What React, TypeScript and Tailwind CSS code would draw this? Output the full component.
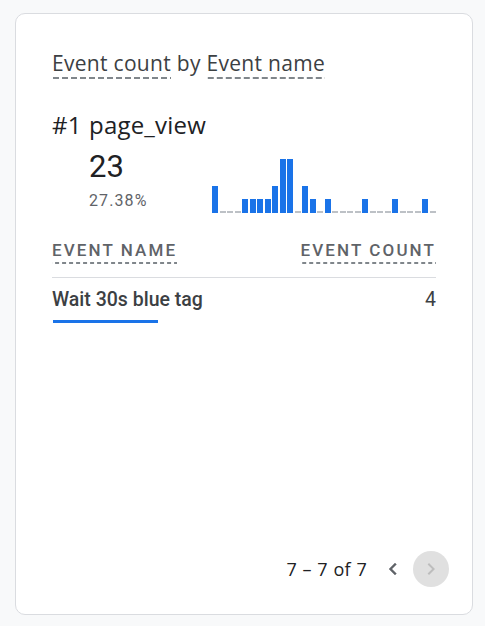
const bars = [2, 0, 0, 0, 1, 1, 1, 1, 2, 4, 4, 0, 2, 1, 0, 1, 0, 0, 0, 0, 1, 0, 0, 0, 1, 0, 0, 0, 1, 0];

const titleDash =
    "bg-[linear-gradient(to_right,#80868b_6px,transparent_6px)] bg-[length:9px_2px] bg-repeat-x bg-bottom pb-[1.5px]";
const headDash =
    "bg-[linear-gradient(to_right,#80868b_4px,transparent_4px)] bg-[length:7px_2px] bg-repeat-x bg-bottom pb-[2.5px]";

export default function App() {
    return (
        <main className="w-[485px] h-[626px] bg-[#f8f9fa] pt-[13px] px-[15px] font-['Roboto',sans-serif]">
            <div className="w-[458px] h-[602px] bg-white border border-[#dadce0] rounded-[10px] px-[36px] pt-[34px] pb-[27px] flex flex-col">
                <h2 className="text-[21px] leading-[30px] tracking-[0.3px] text-[#3c4043] font-['Open_Sans',sans-serif]">
                    <span className={titleDash}>Event count</span>
                    {" by "}
                    <span className={titleDash}>Event name</span>
                </h2>

                <div className="mt-[30.5px] flex text-[24px] leading-[32px] tracking-[0.2px] text-[#202124] font-['Open_Sans',sans-serif]">
                    <span className="w-[37px]">#1</span>
                    <span>page_view</span>
                </div>

                <div className="flex items-end">
                    <div className="pl-[37px] w-[160px] pb-[1.5px]">
                        <div className="mt-[7.5px] text-[31px] leading-[38px] text-[#202124]">23</div>
                        <div className="mt-[5px] text-[16px] leading-[20px] tracking-[1.1px] text-[#5f6368]">27.38%</div>
                    </div>
                    <div className="flex items-end gap-[1.5px] h-[60px]">
                        {bars.map((v, i) => (
                            <div
                                key={i}
                                className={v ? "w-[6px] bg-[#1a73e8]" : "w-[6px] bg-[#bdc1c6]"}
                                style={{ height: v ? v * 13.5 : 2 }}
                            />
                        ))}
                    </div>
                </div>

                <div className="mt-[26.5px] flex justify-between text-[17px] leading-[22px] tracking-[2.1px] font-medium text-[#5f6368]">
                    <span className={headDash}>EVENT NAME</span>
                    <span className={headDash}>EVENT COUNT</span>
                </div>

                <div className="mt-[13.5px] border-t border-[#dadce0]" />

                <div className="mt-[10.3px] flex justify-between text-[19.5px] leading-[24px] text-[#3c4043]">
                    <span className="font-medium">Wait 30s blue tag</span>
                    <span>4</span>
                </div>
                <div className="mt-[7.7px] ml-[1px] w-[105px] h-[3px] bg-[#1a73e8]" />

                <div className="mt-auto -mr-[13px] flex items-center justify-end">
                    <span className="text-[18px] leading-[24px] tracking-[0.3px] [word-spacing:0.5px] text-[#202124] font-['Open_Sans',sans-serif] mr-[14px]">
                        7 – 7 of 7
                    </span>
                    <svg viewBox="0 0 24 24" className="w-[24px] h-[24px] fill-[#5f6368] stroke-[#5f6368] stroke-[0.4]">
                        <path d="M15.41 7.41L14 6l-6 6 6 6 1.41-1.41L10.83 12z" />
                    </svg>
                    <div className="ml-[8px] w-[36px] h-[36px] rounded-full bg-[#e0e0e0] flex items-center justify-center">
                        <svg viewBox="0 0 24 24" className="w-[24px] h-[24px] fill-[#bdbdbd]">
                            <path d="M10 6L8.59 7.41 13.17 12l-4.58 4.59L10 18l6-6z" />
                        </svg>
                    </div>
                </div>
            </div>
        </main>
    );
}
